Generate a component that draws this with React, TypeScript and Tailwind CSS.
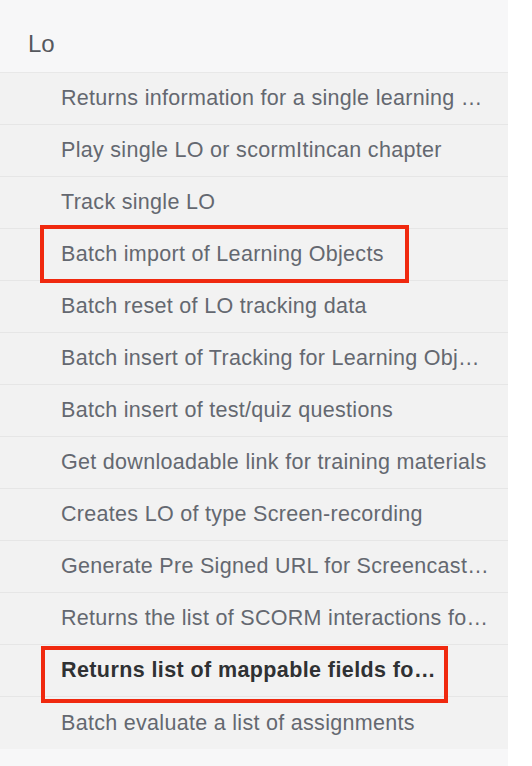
import React from "react";

const items: { label: string; bold?: boolean; box?: "a" | "b" }[] = [
  { label: "Returns information for a single learning object" },
  { label: "Play single LO or scormItincan chapter" },
  { label: "Track single LO" },
  { label: "Batch import of Learning Objects", box: "a" },
  { label: "Batch reset of LO tracking data" },
  { label: "Batch insert of Tracking for Learning Objects" },
  { label: "Batch insert of test/quiz questions" },
  { label: "Get downloadable link for training materials" },
  { label: "Creates LO of type Screen-recording" },
  { label: "Generate Pre Signed URL for Screencast recording" },
  { label: "Returns the list of SCORM interactions for a LO" },
  { label: "Returns list of mappable fields for a LO", bold: true, box: "b" },
  { label: "Batch evaluate a list of assignments" },
];

export default function App() {
  return (
    <div className="w-[532px] h-[766px] bg-white" style={{ fontFamily: '"Liberation Sans", Arial, sans-serif' }}>
      <div className="w-[508px] h-[766px] bg-[#f7f7f8] flex flex-col">
        <div className="h-[72px] flex items-center pl-[28px] pt-[16px] text-[24px] text-[#55585d]">Lo</div>
        <div className="flex flex-col border-t border-[#e8e8e8]">
          {items.map((it, i) => (
            <div
              key={i}
              className={`relative h-[52px] flex items-center bg-[#f2f2f2] ${i < items.length - 1 ? "border-b border-[#e6e6e6]" : ""}`}
            >
              <div
                className={`pl-[61px] w-full truncate text-[21.5px] tracking-[0.3px] ${it.bold ? "pr-[72px] font-bold tracking-[0.4px] text-[#2f3133]" : "pr-[18px] text-[#646870]"}`}
              >
                {it.label}
              </div>
              {it.box === "a" && (
                <div className="absolute z-10 left-[40px] top-[-4px] w-[369px] h-[58px] border-[4.5px] border-[#f0290f]" />
              )}
              {it.box === "b" && (
                <div className="absolute z-10 left-[41px] top-[1px] w-[407px] h-[57px] border-[4.5px] border-[#f0290f]" />
              )}
            </div>
          ))}
        </div>
      </div>
    </div>
  );
}
